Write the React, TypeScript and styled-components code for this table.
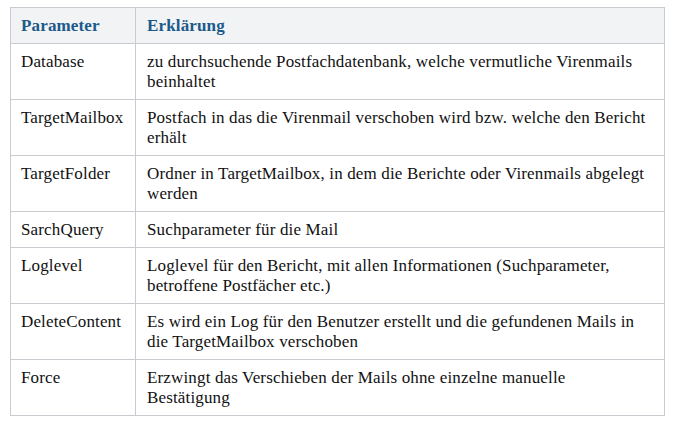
import React from 'react';
import styled, { createGlobalStyle } from 'styled-components'

const serif = `"Liberation Serif", "Times New Roman", serif`

const GlobalStyle = createGlobalStyle`
  body {
    margin: 0;
    background: #ffffff;
    font-family: ${serif};
  }
`

interface IRow {
  name: string,
  lines: string[],
}

// lines are split where the reference wraps them
const rows: IRow[] = [
  { name: 'Database', lines: ['zu durchsuchende Postfachdatenbank, welche vermutliche Virenmails', 'beinhaltet'] },
  { name: 'TargetMailbox', lines: ['Postfach in das die Virenmail verschoben wird bzw. welche den Bericht', 'erhält'] },
  { name: 'TargetFolder', lines: ['Ordner in TargetMailbox, in dem die Berichte oder Virenmails abgelegt', 'werden'] },
  { name: 'SarchQuery', lines: ['Suchparameter für die Mail'] },
  { name: 'Loglevel', lines: ['Loglevel für den Bericht, mit allen Informationen (Suchparameter,', 'betroffene Postfächer etc.)'] },
  { name: 'DeleteContent', lines: ['Es wird ein Log für den Benutzer erstellt und die gefundenen Mails in', 'die TargetMailbox verschoben'] },
  { name: 'Force', lines: ['Erzwingt das Verschieben der Mails ohne einzelne manuelle', 'Bestätigung'] },
]

const App: React.FC = () => {
  return (
    <Page>
      <GlobalStyle />
      <Table>
        <colgroup>
          <col style={{ width: 125 }} />
          <col />
        </colgroup>
        <thead>
          <tr>
            <Head>Parameter</Head>
            <Head $wide>Erklärung</Head>
          </tr>
        </thead>
        <tbody>
          {rows.map(({ name, lines }) => (
            <tr key={name}>
              <Cell>{name}</Cell>
              <Cell $wide>
                {lines.map((l, i) => <Line key={i}>{l}</Line>)}
              </Cell>
            </tr>
          ))}
        </tbody>
      </Table>
    </Page>
  )
}

const Page = styled.div`
  padding: 7px 0 0 10px;
`

const Table = styled.table`
  width: 655px;
  border-collapse: collapse;
  table-layout: fixed;
  border: 1px solid #c8ccd1;
  font-family: ${serif};
`

const Head = styled.th<{ $wide?: boolean }>`
  background: #f2f3f5;
  color: #1b5a8a;
  font-family: ${serif};
  font-size: 17px;
  font-weight: 700;
  letter-spacing: 0.15px;
  text-align: left;
  line-height: 20px;
  padding: 8px 4px 7px ${p => p.$wide ? '11px' : '10px'};
  border: 1px solid #c8ccd1;
`

const Cell = styled.td<{ $wide?: boolean }>`
  color: #111111;
  font-family: ${serif};
  font-size: 17px;
  letter-spacing: 0.15px;
  line-height: 20px;
  vertical-align: top;
  padding: 8px 4px 7px ${p => p.$wide ? '11px' : '10px'};
  border: 1px solid #c8ccd1;
`

const Line = styled.span`
  display: block;
  white-space: nowrap;
`

export default App;
